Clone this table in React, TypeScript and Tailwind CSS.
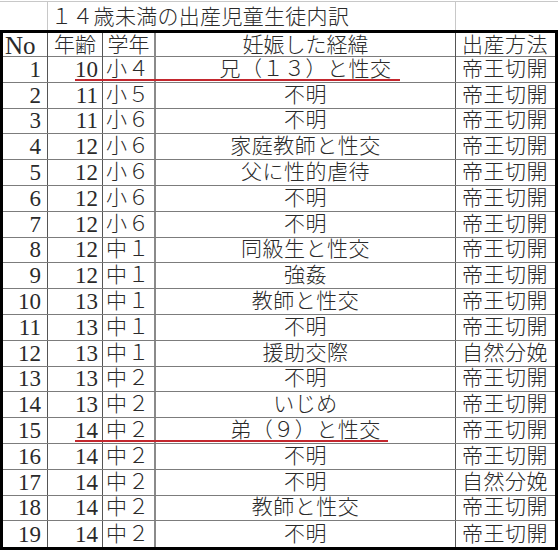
const rows: [number, number, string, string, string][] = [
  [1, 10, '小４', '兄（１３）と性交', '帝王切開'],
  [2, 11, '小５', '不明', '帝王切開'],
  [3, 11, '小６', '不明', '帝王切開'],
  [4, 12, '小６', '家庭教師と性交', '帝王切開'],
  [5, 12, '小６', '父に性的虐待', '帝王切開'],
  [6, 12, '小６', '不明', '帝王切開'],
  [7, 12, '小６', '不明', '帝王切開'],
  [8, 12, '中１', '同級生と性交', '帝王切開'],
  [9, 12, '中１', '強姦', '帝王切開'],
  [10, 13, '中１', '教師と性交', '帝王切開'],
  [11, 13, '中１', '不明', '帝王切開'],
  [12, 13, '中１', '援助交際', '自然分娩'],
  [13, 13, '中２', '不明', '帝王切開'],
  [14, 13, '中２', 'いじめ', '帝王切開'],
  [15, 14, '中２', '弟（９）と性交', '帝王切開'],
  [16, 14, '中２', '不明', '帝王切開'],
  [17, 14, '中２', '不明', '自然分娩'],
  [18, 14, '中２', '教師と性交', '帝王切開'],
  [19, 14, '中２', '不明', '帝王切開'],
];

// red underline marks drawn over rows 1 and 15
const marks: Record<number, string> = {
  1: 'left-[72px] w-[325px]',
  15: 'left-[72px] w-[313px]',
};

const font = { fontFamily: '"Liberation Serif", "Noto Sans CJK JP", serif' };

export default function App() {
  return (
    <div className="w-[558px] h-[550px] bg-white text-[#2a2a2a] text-[21px] font-light leading-none overflow-hidden" style={font}>
      {/* title row */}
      <div className="grid grid-cols-[48px_408px_102px] h-[29px] border-t border-[#c8c8c8] mt-px">
        <div className="border-r border-[#c8c8c8]" />
        <div className="border-r border-[#c8c8c8] flex items-center pl-[3px] pt-[2px] tracking-[0.3px]">
          １４歳未満の出産児童生徒内訳
        </div>
        <div />
      </div>

      {/* table */}
      <div className="border-[3px] border-black">
        <div className="grid grid-cols-[45px_55px_53px_300px_99px] h-[24px] border-b border-[#7c7c7c]">
          <div className="border-r border-[#555] flex items-center pl-[2px] text-[25px]">No</div>
          <div className="border-r border-[#555] flex items-center justify-center">年齢</div>
          <div className="border-r-2 border-[#8a8a8a] flex items-center justify-center">学年</div>
          <div className="border-r border-[#555] flex items-center justify-center">妊娠した経緯</div>
          <div className="flex items-center pl-[6px] tracking-[0.5px]">出産方法</div>
        </div>
        {rows.map(([no, age, grade, cause, method]) => (
          <div
            key={no}
            className={`relative grid grid-cols-[45px_55px_53px_300px_99px] h-[25.8px] ${no < 19 ? 'border-b border-[#7c7c7c]' : ''}`}
          >
            <div className="border-r border-[#555] flex items-center justify-end pr-[6px] text-[23px]">{no}</div>
            <div className="border-r border-[#555] flex items-center justify-end pr-[4px] text-[23px]">{age}</div>
            <div className="border-r-2 border-[#8a8a8a] flex items-center pl-[3px] tracking-[1px]">{grade}</div>
            <div className="border-r border-[#555] flex items-center justify-center tracking-[0.5px]">{cause}</div>
            <div className="flex items-center pl-[6px] tracking-[0.5px]">{method}</div>
            {marks[no] && <span className={`absolute top-[22px] h-[2px] bg-[#c3272e] ${marks[no]}`} />}
          </div>
        ))}
      </div>
    </div>
  );
}
